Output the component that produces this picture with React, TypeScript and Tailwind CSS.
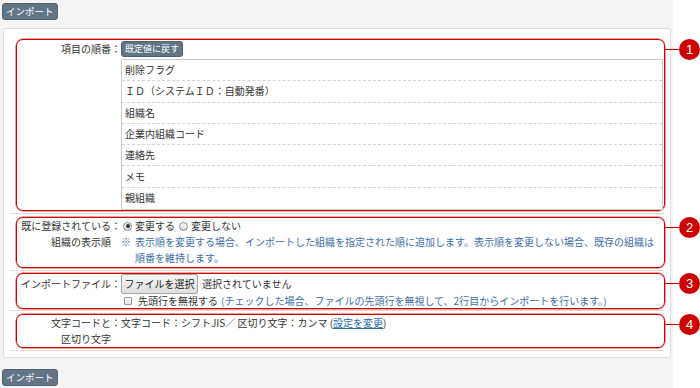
import React from 'react';

const font = "font-['Noto_Sans_CJK_JP','Noto_Sans',sans-serif]";

const SlateButton: React.FC<{ children: React.ReactNode }> = ({ children }) => (
  <button className="h-[17px] rounded-[3px] border border-[#51636f] bg-[#627586] px-[3px] text-[9.5px] leading-[15px] text-white">
    {children}
  </button>
);

const Callout: React.FC<{ n: number }> = ({ n }) => (
  <div className="absolute left-full top-[-1px] ml-[1px] flex items-center">
    <div className="h-px w-[14px] bg-[#cc0000]" />
    <div className="flex h-[21px] w-[21px] items-center justify-center rounded-full bg-[#cc0000] font-['Liberation_Sans',sans-serif] text-[13px] leading-none text-white">
      {n}
    </div>
  </div>
);

const Row: React.FC<{ n: number; pad: string; children: React.ReactNode }> = ({ n, pad, children }) => (
  <div className={`border-b border-[#dddddd] ${pad}`}>
    <div className="relative ml-[6px] mr-[-1px] rounded-[7px] border border-[#cc0000] shadow-[0_0_0_0.5px_#e04040]">
      {children}
      <Callout n={n} />
    </div>
  </div>
);

const Radio: React.FC<{ checked?: boolean }> = ({ checked }) => (
  <span className="inline-flex h-[9px] w-[9px] items-center justify-center rounded-full border border-[#8a8a8a] bg-gradient-to-b from-[#f8f8f8] to-[#dcdcdc]">
    {checked && <span className="h-[4px] w-[4px] rounded-full bg-[#333]" />}
  </span>
);

const items = [
  '削除フラグ',
  'ＩＤ（システムＩＤ：自動発番）',
  '組織名',
  '企業内組織コード',
  '連絡先',
  'メモ',
  '親組織',
];

export default function App() {
  return (
    <div className={`flex min-h-[388px] bg-white text-[10px] leading-[16px] text-[#333] ${font}`}>
      <div className="w-[673px] bg-[#f4f4f4] pl-[2px] pt-[3px]">
        <SlateButton>インポート</SlateButton>

        <div className="ml-[1px] mt-[8px] w-[668px] rounded-[3px] border border-[#dddddd] bg-white px-[6px] pb-[6px] pt-[7px]">
          {/* 項目の順番 */}
          <Row n={1} pad="pt-[3px] pb-[2px]">
            <div className="flex">
              <div className="w-[104px] pt-[1px] text-right">項目の順番：</div>
              <div className="flex-1 pt-[1px]">
                <button className="block h-[16px] rounded-[3px] border border-[#51636f] bg-[#627586] px-[3px] text-[9px] leading-[14px] text-white">
                  既定値に戻す
                </button>
                <div className="mt-[2px] mr-[1px] border border-[#cccccc] bg-white">
                  {items.map((t, i) => (
                    <div
                      key={i}
                      className={`flex h-[21.3px] items-center pl-[3px] ${
                        i < items.length - 1 ? 'border-b border-dashed border-[#d4d4d4]' : ''
                      }`}
                    >
                      {t}
                    </div>
                  ))}
                </div>
              </div>
            </div>
          </Row>

          {/* 表示順 */}
          <Row n={2} pad="pt-[3px] pb-[2px]">
            <div className="flex pb-[1px]">
              <div className="w-[104px] text-right">
                <div className="h-[16px]">既に登録されている：</div>
                <div className="h-[16px] pr-[10px]">組織の表示順</div>
              </div>
              <div className="flex-1">
                <div className="flex h-[16px] items-center">
                  <span className="ml-[2px] mr-[3px] flex"><Radio checked /></span>
                  <span>変更する</span>
                  <span className="ml-[4px] mr-[3px] flex"><Radio /></span>
                  <span>変更しない</span>
                </div>
                <div className="flex pr-[8px] text-[#3d6fa5]">
                  <span className="w-[14px] shrink-0">※</span>
                  <span>
                    表示順を変更する場合、インポートした組織を指定された順に追加します。表示順を変更しない場合、既存の組織は順番を維持します。
                  </span>
                </div>
              </div>
            </div>
          </Row>

          {/* インポートファイル */}
          <Row n={3} pad="pt-[2px] pb-[1px]">
            <div className="flex">
              <div className="w-[104px] pt-[2px] text-right">インポートファイル：</div>
              <div className="flex-1">
                <div className="flex h-[20px] items-center">
                  <button className="h-[20px] w-[77px] rounded-[2px] border border-[#a6a6a6] bg-gradient-to-b from-[#f7f7f7] to-[#dedede] text-[10px] leading-[18px] text-[#222]">
                    ファイルを選択
                  </button>
                  <span className="ml-[4px]">選択されていません</span>
                </div>
                <div className="flex h-[14px] items-center">
                  <span className="ml-[3px] mr-[6px] inline-block h-[8px] w-[8px] rounded-[1px] border border-[#9a9a9a] bg-gradient-to-b from-white to-[#e6e6e6]" />
                  <span>先頭行を無視する</span>
                  <span className="ml-[3px] text-[#3d6fa5]">
                    (チェックした場合、ファイルの先頭行を無視して、2行目からインポートを行います。)
                  </span>
                </div>
              </div>
            </div>
          </Row>

          {/* 文字コード */}
          <Row n={4} pad="pt-[3px] pb-[2px]">
            <div className="flex">
              <div className="w-[104px] text-right">
                <div className="h-[16px]">文字コードと：</div>
                <div className="h-[16px] pr-[10px]">区切り文字</div>
              </div>
              <div className="h-[32px] flex-1">
                文字コード：シフトJIS／ 区切り文字：カンマ (
                <span className="text-[#2a6aad] underline">設定を変更</span>)
              </div>
            </div>
          </Row>
        </div>

        <div className="mt-[11px]">
          <SlateButton>インポート</SlateButton>
        </div>
      </div>
    </div>
  );
}
